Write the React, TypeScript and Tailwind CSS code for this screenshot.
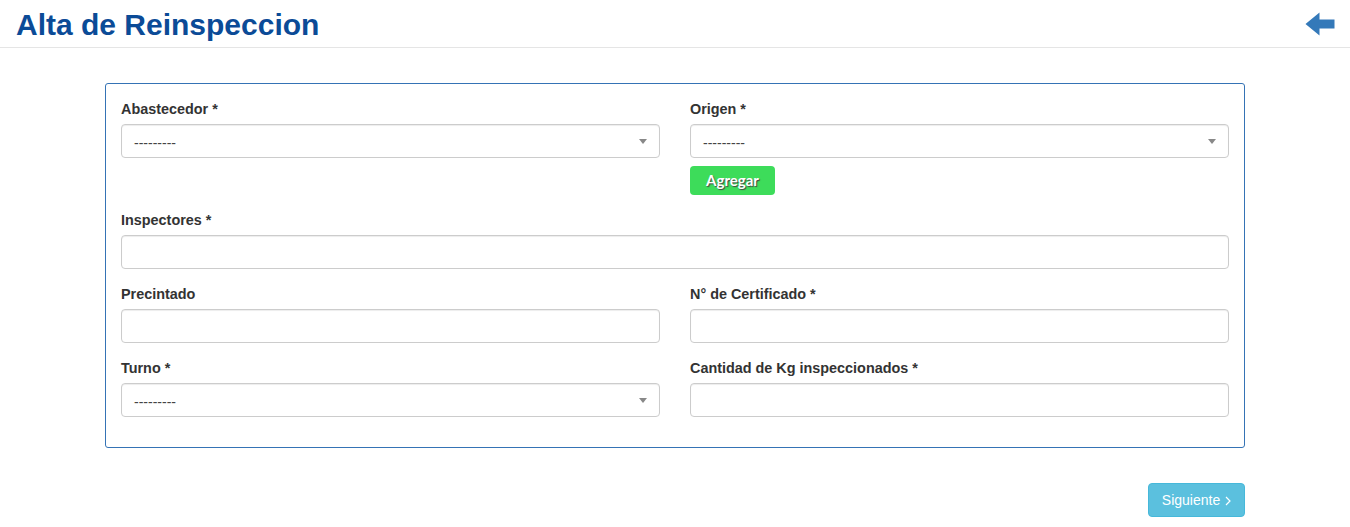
import { ReactNode } from 'react';

const Label = ({ children }: { children: ReactNode }) => (
  <label className="mb-[5px] block pt-[1px] text-[14.4px] font-bold leading-[19px] text-[#333]">{children}</label>
);

const TextInput = () => (
  <input
    type="text"
    className="block h-[34px] w-full rounded-[4px] border border-[#ccc] bg-white px-3 text-[14px] shadow-[inset_0_1px_1px_rgba(0,0,0,0.075)] outline-none"
  />
);

const SelectBox = () => (
  <div className="relative flex h-[34px] w-full items-center rounded-[4px] border border-[#ccc] bg-white pl-3 pr-8 pt-[3px] shadow-[inset_0_1px_1px_rgba(0,0,0,0.075)]">
    <span className="text-[14px] leading-none text-[#444]">---------</span>
    <span className="absolute right-[12px] top-1/2 -mt-[2px] h-0 w-0 border-x-[4px] border-t-[5px] border-x-transparent border-t-[#888]" />
  </div>
);

const Field = ({ label, children }: { label: string; children: ReactNode }) => (
  <div className="mb-[15px]">
    <Label>{label}</Label>
    {children}
  </div>
);

export default function App() {
  return (
    <div className="min-h-[527px] bg-white font-['Liberation_Sans',Arial,sans-serif] text-[#333]">
      {/* Header */}
      <div className="flex h-[48px] items-center justify-between border-b border-[#e5e5e5] pl-4 pr-[15px]">
        <h1 className="pt-[2px] text-[30px] font-bold leading-none text-[#0b4b97]">Alta de Reinspeccion</h1>
        <svg width="30" height="24" viewBox="0 0 30 24" className="mt-[1px]">
          <path d="M0.5 12 L14.5 0.5 L14.5 7.5 L29.5 7.5 L29.5 16.5 L14.5 16.5 L14.5 23.5 Z" fill="#3479b9" />
        </svg>
      </div>

      <div className="mx-auto w-[1170px] px-[15px] pt-[35px]">
        {/* Card */}
        <div className="rounded-[3px] border border-[#3573b5] px-[15px] pb-[15px] pt-[15px]">
          <div className="grid grid-cols-2 gap-x-[30px]">
            <div className="mb-[15px]">
              <Label>Abastecedor *</Label>
              <SelectBox />
            </div>
            <div className="mb-[15px]">
              <Label>Origen *</Label>
              <SelectBox />
              <button className="mt-[8px] h-[29px] w-[85px] rounded-[4px] bg-[#3ddc5a] font-['Lato',sans-serif] text-[15px] font-bold text-white [text-shadow:1px_1px_1px_#444]">
                Agregar
              </button>
            </div>
          </div>

          <Field label="Inspectores *">
            <TextInput />
          </Field>

          <div className="grid grid-cols-2 gap-x-[30px]">
            <Field label="Precintado">
              <TextInput />
            </Field>
            <Field label="N° de Certificado *">
              <TextInput />
            </Field>
            <Field label="Turno *">
              <SelectBox />
            </Field>
            <Field label="Cantidad de Kg inspeccionados *">
              <TextInput />
            </Field>
          </div>
        </div>

        {/* Footer */}
        <div className="mt-[35px] flex justify-end">
          <button className="flex h-[34px] w-[97px] items-center justify-center gap-[5px] rounded-[4px] border border-[#46b8da] bg-[#5bc0de] text-[14px] text-white">
            Siguiente
            <svg width="6" height="10" viewBox="0 0 6 10" className="mt-[2px]">
              <path d="M1 1 L5 5 L1 9" fill="none" stroke="white" strokeWidth="1.2" />
            </svg>
          </button>
        </div>
      </div>
    </div>
  );
}
